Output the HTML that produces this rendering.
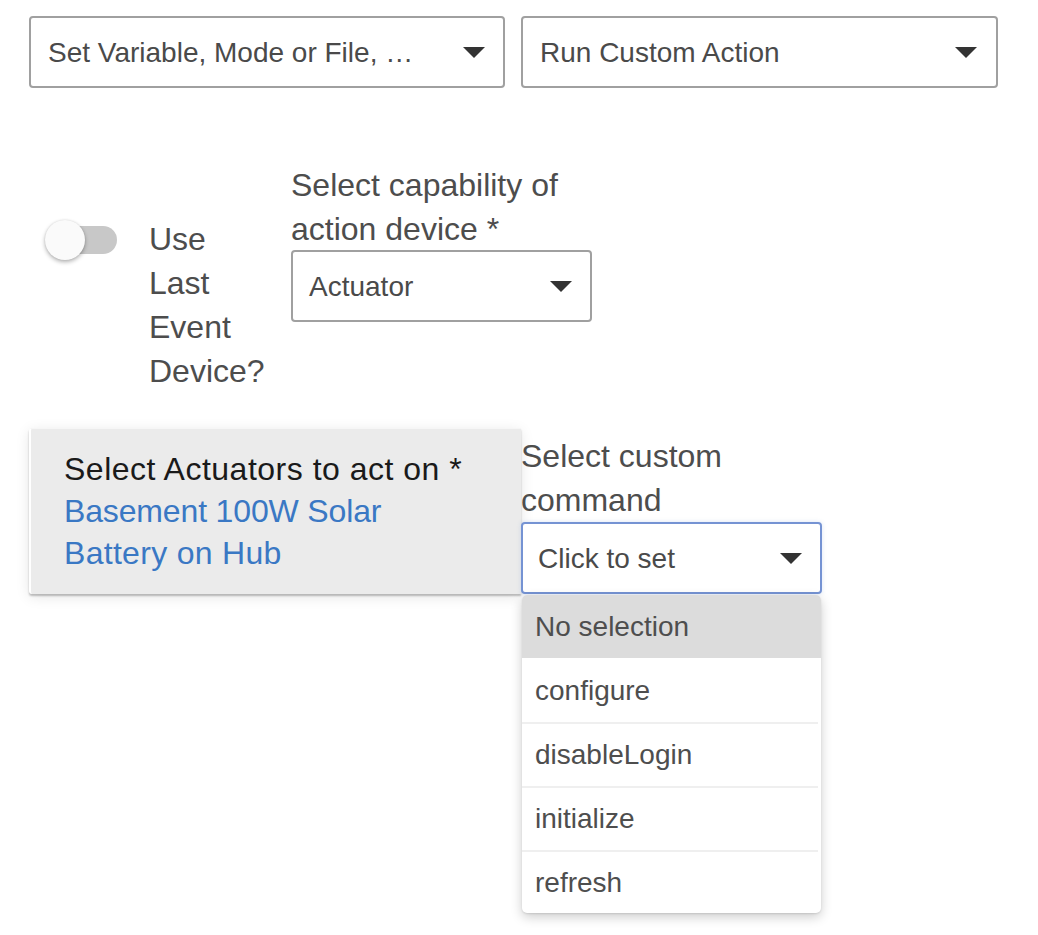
<!DOCTYPE html>
<html><head><meta charset="utf-8">
<style>
html,body{margin:0;padding:0;background:#fff;width:1038px;height:935px;overflow:hidden;position:relative;font-family:"Liberation Sans",sans-serif;}
.abs{position:absolute;}
.sel{position:absolute;box-sizing:border-box;border:2px solid #a0a0a0;border-radius:4px;background:#fff;}
.sel .t{position:absolute;font-size:28px;color:#4a4a4a;white-space:nowrap;line-height:28px;}
.tri{position:absolute;width:0;height:0;border-left:11px solid transparent;border-right:11px solid transparent;border-top:11px solid #333;}
.lbl{position:absolute;font-size:32px;color:#4d4d4d;line-height:44px;white-space:nowrap;}
.card{position:absolute;left:29px;top:428px;width:492px;height:166px;box-sizing:border-box;border-left:2px solid #fff;border-top:1px solid #f6f6f6;background:#ebebeb;border-radius:3px 0 0 3px;box-shadow:0 2px 2px rgba(0,0,0,0.24),0 3px 14px rgba(0,0,0,0.10);}
.card .t{position:absolute;font-size:32px;line-height:42.5px;white-space:nowrap;}
.dd{position:absolute;left:522px;top:595px;width:299px;height:318px;background:#fff;border-radius:5px;box-shadow:0 4px 12px rgba(0,0,0,0.2),0 1px 2px rgba(0,0,0,0.1);overflow:hidden;}
.row{position:absolute;left:0;width:299px;height:64px;box-sizing:border-box;}
.row+.sep{z-index:2;}
.row .t{position:absolute;left:13px;font-size:28px;color:#4e4e4e;white-space:nowrap;line-height:28px;}
.sep{position:absolute;left:0;width:296px;height:2px;background:#efefef;z-index:2;}
</style></head><body>

<div class="sel" style="left:29px;top:16px;width:476px;height:72px;">
  <div class="t" style="left:17px;top:21px;">Set Variable, Mode or File, …</div>
  <div class="tri" style="left:432px;top:29px;"></div>
</div>
<div class="sel" style="left:521px;top:16px;width:477px;height:72px;">
  <div class="t" style="left:17px;top:21px;">Run Custom Action</div>
  <div class="tri" style="left:432px;top:29px;"></div>
</div>

<!-- toggle -->
<div class="abs" style="left:49px;top:226px;width:68px;height:28px;border-radius:14px;background:#c8c8c8;"></div>
<div class="abs" style="left:45px;top:220px;width:40px;height:40px;border-radius:50%;background:#fafafa;box-shadow:0 2px 4px rgba(0,0,0,0.3),0 0 2px rgba(0,0,0,0.1);"></div>

<div class="lbl" style="left:149px;top:217px;">Use<br>Last<br>Event<br>Device?</div>

<div class="lbl" style="left:291px;top:163px;">Select capability of<br>action device *</div>
<div class="sel" style="left:291px;top:250px;width:301px;height:72px;">
  <div class="t" style="left:16px;top:21px;">Actuator</div>
  <div class="tri" style="left:257px;top:29px;"></div>
</div>

<div class="card">
  <div class="t" style="left:33px;top:19px;color:#1a1a1a;letter-spacing:0.5px;">Select Actuators to act on *</div>
  <div class="t" style="left:33px;top:61px;color:#3a78c4;letter-spacing:-0.15px;">Basement 100W Solar</div>
  <div class="t" style="left:33px;top:103px;color:#3a78c4;letter-spacing:0.3px;">Battery on Hub</div>
</div>

<div class="lbl" style="left:521px;top:434px;">Select custom<br>command</div>
<div class="sel" style="left:521px;top:522px;width:301px;height:72px;border-color:#7593d3;box-shadow:0 0 4px rgba(110,150,215,0.25);">
  <div class="t" style="left:15px;top:21px;">Click to set</div>
  <div class="tri" style="left:257px;top:29px;"></div>
</div>

<div class="dd">
  <div class="row" style="top:0;height:63px;background:#dcdcdc;"><div class="t" style="top:18px;">No selection</div></div>
  <div class="row" style="top:63px;"><div class="t" style="top:19px;">configure</div></div>
  <div class="sep" style="top:127px;"></div>
  <div class="row" style="top:127px;"><div class="t" style="top:19px;">disableLogin</div></div>
  <div class="sep" style="top:191px;"></div>
  <div class="row" style="top:191px;"><div class="t" style="top:19px;">initialize</div></div>
  <div class="sep" style="top:255px;"></div>
  <div class="row" style="top:255px;"><div class="t" style="top:19px;">refresh</div></div>
</div>

</body></html>
